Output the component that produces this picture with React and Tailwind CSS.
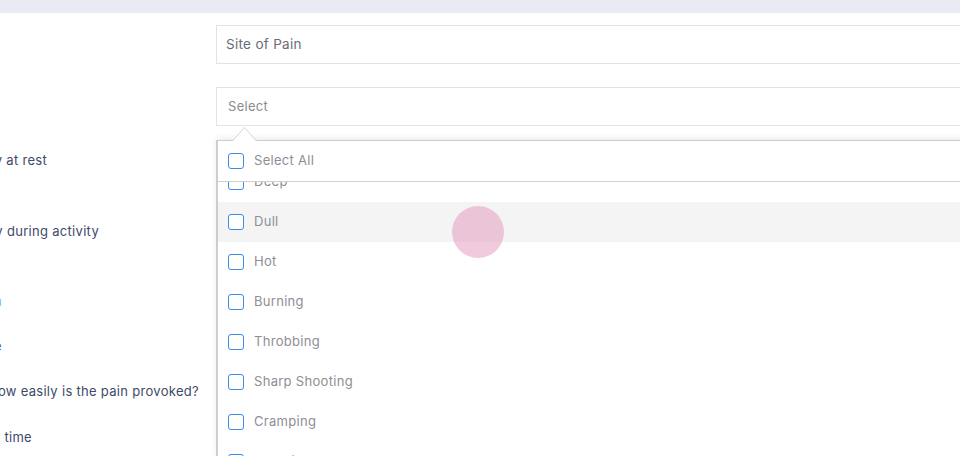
import { Fragment } from 'react';

const options = ['Deep', 'Dull', 'Hot', 'Burning', 'Throbbing', 'Sharp Shooting', 'Cramping', 'Stabbing'];

const labels = [
  { text: 'Severity at rest', w: 'w-[47px]', mt: 'mt-0', color: 'text-[#3e4a67]' },
  { text: 'Severity during activity', w: 'w-[99px]', mt: 'mt-[51px]', color: 'text-[#3e4a67]' },
  { text: 'Body Diagram', w: 'w-[2px]', mt: 'mt-[50px]', color: 'text-[#5bbef5]' },
  { text: 'Irritable', w: 'w-[2px]', mt: 'mt-[25px]', color: 'text-[#3f5e9e]' },
  { text: 'How easily is the pain provoked?', w: 'w-[199px]', mt: 'mt-[25px]', color: 'text-[#3e4a67]' },
  { text: 'Night time', w: 'w-[32px]', mt: 'mt-[26px]', color: 'text-[#3e4a67]' },
];

const Checkbox = () => (
  <span className="h-[16px] w-[16px] shrink-0 rounded-[3px] border-[1.5px] border-[#3b8beb] bg-white" />
);

const App = () => {
  return (
    <div className="relative h-[456px] w-[960px] overflow-hidden bg-white font-['Inter',sans-serif]">
      {/* ── TOP BAR ── */}
      <div className="h-[13px] bg-[#e8ebf3]" />

      <div className="flex">
        {/* Left column: labels (clipped by the window edge) */}
        <div className="flex w-[216px] shrink-0 flex-col pt-[137px]">
          {labels.map((l) => (
            <div key={l.text} className={`${l.mt} ${l.w} flex h-[20px] justify-end whitespace-nowrap text-[13px] leading-[20px] tracking-[0.3px] ${l.color}`}>
              {l.text}
            </div>
          ))}
        </div>

        {/* Right column: inputs */}
        <div className="w-[800px] shrink-0 pt-[12px]">
          <div className="flex h-[39px] items-center border border-[#e2e2e8] px-[9px] text-[13.5px] tracking-[0.3px] text-[#6b6b76]">
            Site of Pain
          </div>

          <div className="mt-[23px] flex h-[39px] items-center border border-[#e2e2e8] px-[11px] text-[13px] tracking-[0.3px] text-[#8c8c8c]">
            Select
          </div>

          {/* Dropdown */}
          <div className="relative z-10 -mb-px ml-[16px] h-[15px] w-[26px]">
            <svg width="26" height="15" viewBox="0 0 26 15">
              <path d="M0.5 15 L12.5 1.5 L24.5 15 Z" fill="#fff" stroke="none" />
              <path d="M0.5 15 L12.5 1.5 L24.5 15" fill="none" stroke="#d4d4d8" strokeWidth="1" />
            </svg>
          </div>
          <div className="h-[320px] border-l-2 border-t border-[#cdcdcd] bg-white shadow-[0_-2px_6px_rgba(0,0,0,0.08)]">
            <div className="flex h-[41px] items-center gap-[10px] border-b border-[#cfcfcf] pl-[10px] text-[13px] tracking-[0.3px] text-[#8e8e95]">
              <Checkbox />
              <span>Select All</span>
            </div>
            <div className="h-[279px] overflow-hidden">
              <div className="-mt-[20px]">
                {options.map((opt) => (
                  <Fragment key={opt}>
                    <div className={`relative flex h-[40px] items-center gap-[10px] pl-[10px] text-[13px] tracking-[0.3px] text-[#8e8e95] ${opt === 'Dull' ? 'bg-[#f4f4f4]' : ''}`}>
                      <Checkbox />
                      <span>{opt}</span>
                      {opt === 'Dull' && (
                        <span className="absolute left-[234px] top-[4px] z-10 h-[52px] w-[52px] rounded-full bg-[rgba(225,140,180,0.45)]" />
                      )}
                    </div>
                  </Fragment>
                ))}
              </div>
            </div>
          </div>
        </div>
      </div>
    </div>
  );
};

export default App;
